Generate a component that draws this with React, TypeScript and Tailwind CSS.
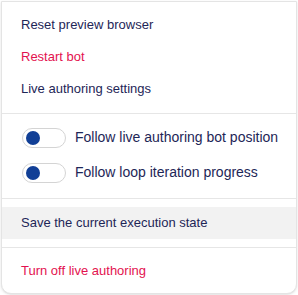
import { useState } from 'react';

function Toggle(props: { label: string }) {
    const [on, setOn] = useState(false);
    return (
        <button
            type="button"
            onClick={() => setOn(!on)}
            className="flex items-center h-[35px] pl-[20px] w-full text-left"
        >
            <span
                className={
                    'relative flex shrink-0 items-center w-[44px] h-[20px] rounded-full border border-[#d4d4d4] bg-white ' +
                    (on ? 'justify-end' : 'justify-start')
                }
            >
                <span className="w-[14px] h-[14px] mx-[3px] rounded-full bg-[#113f96]" />
            </span>
            <span className="ml-[9px] whitespace-nowrap text-[14px] text-[#1e2657]">{props.label}</span>
        </button>
    );
}

function Item(props: { label: string; danger?: boolean; active?: boolean }) {
    return (
        <div
            className={
                'flex items-center h-[32px] px-[19px] text-[13px] ' +
                (props.danger ? 'text-[#e3124f] ' : 'text-[#1e2657] ') +
                (props.active ? 'bg-[#f2f2f2]' : '')
            }
        >
            {props.label}
        </div>
    );
}

export default function App() {
    return (
        <div className="w-[298px] h-[295px] bg-white" style={{ fontFamily: '"Liberation Sans", Arial, sans-serif' }}>
            <div className="w-[296px] h-[293px] ml-px mt-px bg-white border border-[#e4e4e4] rounded-b-[10px] shadow-sm flex flex-col">
                <div className="pt-[7px] pb-[8px]">
                    <Item label="Reset preview browser" />
                    <Item label="Restart bot" danger />
                    <Item label="Live authoring settings" />
                </div>
                <div className="border-t border-[#e6e6e6] pt-[6px] pb-[8px]">
                    <Toggle label="Follow live authoring bot position" />
                    <Toggle label="Follow loop iteration progress" />
                </div>
                <div className="border-t border-[#e6e6e6] py-[8px]">
                    <Item label="Save the current execution state" active />
                </div>
                <div className="border-t border-[#e6e6e6] py-[7px]">
                    <Item label="Turn off live authoring" danger />
                </div>
            </div>
        </div>
    );
}
